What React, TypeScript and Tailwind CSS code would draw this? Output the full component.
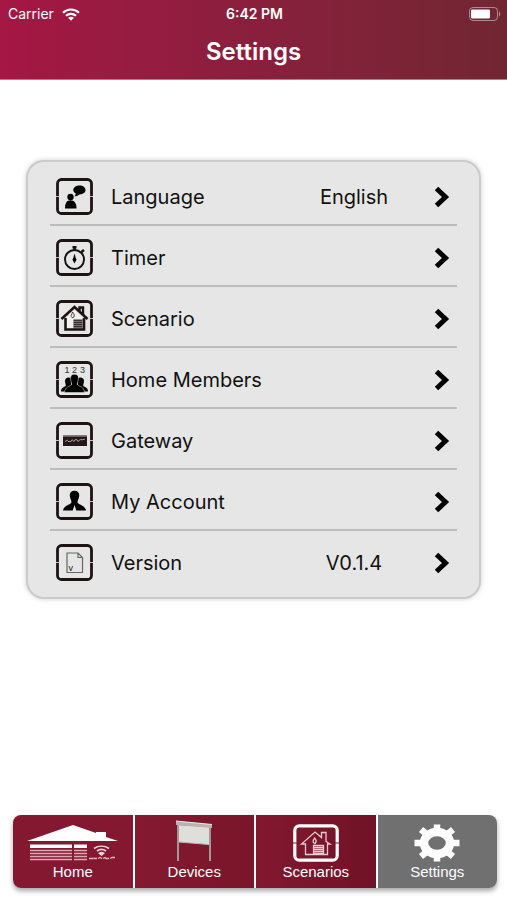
import React, { ReactNode } from 'react';

interface SettingsItem {
  label: string;
  value?: string;
  icon: ReactNode;
}

interface TabItem {
  label: string;
  icon: ReactNode;
  className: string;
}

// Rounded square with a small cut on both sides, shared by all list icons
const IconFrame: React.FC<{ children: ReactNode }> = ({ children }) => (
  <svg viewBox="0 0 37 37" className="h-[37px] w-[37px] shrink-0" fill="none" aria-hidden="true">
    <rect x="1.5" y="1.5" width="34" height="34" rx="4" stroke="#1d1314" strokeWidth="2.8" />
    <path d="M0 18.5H3.5M33.5 18.5H37" stroke="#c4c0c0" strokeWidth="1" />
    {children}
  </svg>
);

const LanguageIcon = () => (
  <IconFrame>
    <g fill="#000">
      <circle cx="14.5" cy="19" r="3.2" />
      <path d="M9 30.5C9 25.5 10.5 22.3 14.500 22.3S20.5 25.5 20.5 30.5Z" />
      <path d="M23.5 7.500C27 7.500 29.500 9.300 29.500 12S27 16.200 24 16.300C22.500 17.500 20.500 18.300 18.500 18.500C19.300 17.500 19.800 16.500 19.600 15.300C18 14.500 17.300 13.300 17.300 12C17.300 9.300 20 7.500 23.500 7.500Z" />
    </g>
  </IconFrame>
);

const TimerIcon = () => (
  <IconFrame>
    <circle cx="18.5" cy="20.5" r="9.500" stroke="#111" strokeWidth="1.900" />
    <path d="M18.5 8V11M16.500 8.300H20.500M25.500 13L28 11" stroke="#111" strokeWidth="2.400" />
    <path d="M18.5 14.500L20.300 21L18.500 24.500L16.700 21Z" fill="#000" />
    <circle cx="18.5" cy="20.5" r="1.800" fill="#000" />
  </IconFrame>
);

const ScenarioIcon = () => (
  <IconFrame>
    <path d="M10.5 18L18.5 10L26.500 18V28.500H10.500Z" fill="#f1f1f1" />
    <path d="M9.500 18V29.500H28V18" stroke="#1d1314" strokeWidth="2.600" />
    <path d="M5.500 19L18.500 7L31.500 19" stroke="#1d1314" strokeWidth="2.600" />
    <path d="M23.500 11V7.500H27V15" stroke="#1d1314" strokeWidth="2.400" />
    <path d="M16.500 12C18.500 14 18.500 15.500 17.800 17.200C16.500 18.300 14.800 17.200 15.200 15.500C15.400 14.500 16.500 13.500 16.500 12Z" stroke="#333" strokeWidth="0.900" />
    <rect x="17.500" y="19.500" width="9" height="9.500" fill="#3c3233" />
    <path d="M18 21.500H26.500M18 23.500H26.500M18 25.500H26.500M18 27.500H26.500" stroke="#8d8788" strokeWidth="0.700" />
  </IconFrame>
);

const MembersIcon = () => (
  <IconFrame>
    <g className="font-['Liberation_Sans'] text-[9px]" fill="#333">
      <text x="8.500" y="12">1</text>
      <text x="16" y="12">2</text>
      <text x="24" y="12">3</text>
    </g>
    <g fill="#000">
      <path d="M12.500 16.500C14.500 16.500 16 18 15.800 20C15.800 21.500 15 22.500 15 24L17 27V30.500H5C5 27 7 26.500 9.800 25C9.800 23.500 9 21.500 9 20C9 18 10.500 16.500 12.500 16.500Z" />
      <path d="M24.500 16.500C22.500 16.500 21 18 21.200 20C21.200 21.500 22 22.500 22 24L20 27V30.500H32C32 27 30 26.500 27.200 25C27.200 23.500 28 21.500 28 20C28 18 26.500 16.500 24.500 16.500Z" />
    </g>
    <path
      d="M18.500 13.200C21.300 13.200 22.800 15.200 22.500 18C22.300 20 21.200 21.500 21.200 23.500C23.500 25.700 28 25.500 28.500 31.500H8.500C9 25.500 13.500 25.700 15.800 23.500C15.800 21.500 14.700 20 14.500 18C14.200 15.200 15.700 13.200 18.500 13.200Z"
      fill="#000"
      stroke="#e6e6e6"
      strokeWidth="0.500"
    />
  </IconFrame>
);

const GatewayIcon = () => (
  <IconFrame>
    <rect x="7" y="13.500" width="24" height="10.500" fill="#241718" />
    <path d="M7 14.500H31" stroke="#695d5e" strokeWidth="1" />
    <path d="M9 19.500L12 18M12 19.500H15L16 17.700L18 19.500L19 17.700H21L22 19.500L24 17.700H27L29 17" stroke="#b3abab" strokeWidth="0.900" />
  </IconFrame>
);

const AccountIcon = () => (
  <IconFrame>
    <path
      d="M18.500 7.800C21.800 7.800 23.500 9.800 23.200 13C23 15.500 21.500 17 21.500 19.500C23.500 22.300 29 22.300 30 27.500H20.300L18.500 22L16.700 27.500H7C8 22.300 13.500 22.300 15.500 19.500C15.500 17 14 15.500 13.800 13C13.500 9.800 15.200 7.800 18.500 7.800Z"
      fill="#000"
    />
  </IconFrame>
);

const VersionIcon = () => (
  <IconFrame>
    <path d="M11 9H22L26.500 13.500V28.500H11ZM22 9V13.500H26.500" stroke="#666" strokeWidth="1.200" />
    <text x="12.500" y="26.500" className="font-['Liberation_Sans'] text-[9px]" fill="#222">v</text>
  </IconFrame>
);

const Chevron = () => (
  <svg viewBox="0 0 16 22" className="h-[22px] w-4 shrink-0" fill="none" aria-hidden="true">
    <path d="M2.500 2.500L11.500 11L2.500 19.500" stroke="#000" strokeWidth="5" />
  </svg>
);

const WifiIcon = () => (
  <svg viewBox="0 0 18 13" className="h-[13px] w-[18px]" fill="none" aria-hidden="true">
    <path d="M1 4.800C5.500 0.400 12.500 0.400 17 4.800" stroke="#fff" strokeWidth="2.200" />
    <path d="M4 7.800C6.800 5.100 11.200 5.100 14 7.800" stroke="#fff" strokeWidth="2.200" />
    <path d="M9 12.700L6.100 9.800C7.700 8.300 10.300 8.300 11.900 9.800Z" fill="#fff" />
  </svg>
);

const BatteryIcon = () => (
  <svg viewBox="0 0 32 14" className="h-3.5 w-8" aria-hidden="true">
    <rect x="0.500" y="0.500" width="28" height="13" rx="3.500" fill="none" stroke="#fff" strokeOpacity="0.450" />
    <rect x="2" y="2.500" width="19" height="9" rx="1.200" fill="#fff" />
    <path d="M30 4.500C31.800 5.500 31.800 8.500 30 9.500Z" fill="#fff" fillOpacity="0.450" />
  </svg>
);

const HomeTabIcon = () => (
  <svg viewBox="0 0 92 38" className="h-[38px] w-[92px]" aria-hidden="true">
    <path d="M0 17L46 1L69 9V8H79V13L91 17Z" fill="#fff" />
    <path d="M3 20.500H45V24H3ZM47 20.500H60V24H47Z" fill="#fff" />
    <path
      d="M3 26.500H45M3 29.500H45M3 32.500H45M3 35.500H45M47 26.500H60M47 29.500H60M47 32.500H60M47 35.500H60"
      stroke="#dfa9b4"
      strokeWidth="1.700"
    />
    <g fill="none" stroke="#f1d5da" strokeWidth="1.700">
      <path d="M67 24.500C71.500 21.500 77.500 21.500 82 24.500" />
      <path d="M70 27C72.800 25 76.200 25 79 27" />
      <path d="M72.500 29.300C73.800 28.400 75.200 28.400 76.500 29.300L74.500 31Z" />
    </g>
    <path
      d="M62 34.500H66M67 33.500V34.500H70M71 34.500L73 33.500L75 34.500M76 34.500L78 33.500L79 34.500H82M83 34.500L85 33.500H88"
      fill="none"
      stroke="#eeb4bd"
      strokeWidth="1.300"
    />
  </svg>
);

const ScreenTabIcon = () => (
  <svg viewBox="0 0 38 42" className="h-[42px] w-[38px]" aria-hidden="true">
    <path d="M3 3V41M35 6V41" stroke="#a39896" strokeWidth="2" />
    <path d="M4 5L34 7V24.500L4 22Z" fill="#dededb" />
    <path d="M1 1L37 4.500V8L1 5Z" fill="#b9b4b1" />
    <path d="M1 1L37 4.500" stroke="#efecea" strokeWidth="1" />
    <path d="M4 22L34 24.500" stroke="#bbb" strokeWidth="1" />
  </svg>
);

const ScenariosTabIcon = () => (
  <svg viewBox="0 0 46 38" className="h-[38px] w-[46px]" fill="none" aria-hidden="true">
    <rect x="1.800" y="1.800" width="42.400" height="34.400" rx="4.500" stroke="#fff" strokeWidth="3.200" />
    <path d="M0 19H4M42 19H46" stroke="#7c1429" strokeWidth="1" />
    <g stroke="#f0c9d0" strokeWidth="1.300">
      <path d="M12.500 30.500V20H8.500L22 8L28.500 13.500V8.500H33V17.500L37 20H34.500V30.500Z" />
      <path d="M21.500 14C23.500 16 23.500 18 22 19.500C19.500 19 19.500 17 21.500 14Z" />
      <path d="M20.500 30.500V21.500H30.500V30.500M20.500 23.500H30.500M20.500 25.500H30.500M20.500 27.500H30.500M20.500 29.500H30.500" />
    </g>
  </svg>
);

const GearIcon = () => (
  <svg viewBox="0 0 46 38" className="h-[38px] w-[46px]" aria-hidden="true">
    <g fill="none" stroke="#fff">
      <ellipse cx="23" cy="19" rx="13" ry="11" strokeWidth="8.500" />
      <path d="M23 0.500V6M23 32V37.500M0.500 19H8M38 19H45.500" strokeWidth="6.500" />
      <path d="M7 5.500L13 10.500M39 5.500L33 10.500M7 32.500L13 27.500M39 32.500L33 27.500" strokeWidth="6.500" />
    </g>
  </svg>
);

const items: SettingsItem[] = [
  { label: 'Language', value: 'English', icon: <LanguageIcon /> },
  { label: 'Timer', icon: <TimerIcon /> },
  { label: 'Scenario', icon: <ScenarioIcon /> },
  { label: 'Home Members', icon: <MembersIcon /> },
  { label: 'Gateway', icon: <GatewayIcon /> },
  { label: 'My Account', icon: <AccountIcon /> },
  { label: 'Version', value: 'V0.1.4', icon: <VersionIcon /> },
];

const tabs: TabItem[] = [
  { label: 'Home', icon: <HomeTabIcon />, className: 'bg-[#831830]' },
  { label: 'Devices', icon: <ScreenTabIcon />, className: 'bg-linear-to-r from-[#841930] to-[#7a152a]' },
  { label: 'Scenarios', icon: <ScenariosTabIcon />, className: 'bg-linear-to-r from-[#82182f] to-[#711226]' },
  { label: 'Settings', icon: <GearIcon />, className: 'bg-[#707070]' },
];

const App: React.FC = () => {
  return (
    <div className="flex min-h-screen flex-col bg-white font-['Inter',sans-serif]">
      <header className="border-b border-[#b87a8b] bg-linear-to-r from-[#a51644] via-[#8a1f3d] to-[#712632] text-white">
        <div className="grid h-7 grid-cols-3 items-center pr-1.5 pl-2 text-sm">
          <div className="flex items-center gap-2">
            <span>Carrier</span>
            <WifiIcon />
          </div>
          <span className="text-center font-semibold">6:42 PM</span>
          <div className="flex justify-end">
            <BatteryIcon />
          </div>
        </div>
        <h1 className="h-[51px] text-center text-2xl leading-[48px] font-semibold">Settings</h1>
      </header>

      <main className="flex-1 px-[26px] py-20">
        <ul className="rounded-[18px] border-2 border-[#cbcbcb] bg-[#e6e6e6] px-[22px] pt-[3px] pb-[7px] shadow-[0_0_5px_rgba(0,0,0,0.2)]">
          {items.map((item) => (
            <li key={item.label} className="border-b-2 border-[#bcbcbc] last:border-b-0">
              <button className="flex h-[59px] w-full items-center pt-1 pr-[7px] pl-1.5 text-left text-xl text-[#111]">
                {item.icon}
                <span className="ml-[18px] flex-1">{item.label}</span>
                {item.value && <span className="mr-5 w-[120px] text-center">{item.value}</span>}
                <Chevron />
              </button>
            </li>
          ))}
        </ul>
      </main>

      <nav className="mr-[10px] mb-3 ml-[13px] grid grid-cols-4 gap-0.5 overflow-hidden rounded-lg bg-white font-['Liberation_Sans',sans-serif] text-[15px] text-white shadow-[0_3px_5px_rgba(0,0,0,0.35)]">
        {tabs.map((tab) => (
          <button key={tab.label} className={`flex h-[73px] flex-col items-center ${tab.className}`}>
            <span className="flex h-[47px] items-end justify-center">{tab.icon}</span>
            <span className="leading-5">{tab.label}</span>
          </button>
        ))}
      </nav>
    </div>
  );
};

export default App;
